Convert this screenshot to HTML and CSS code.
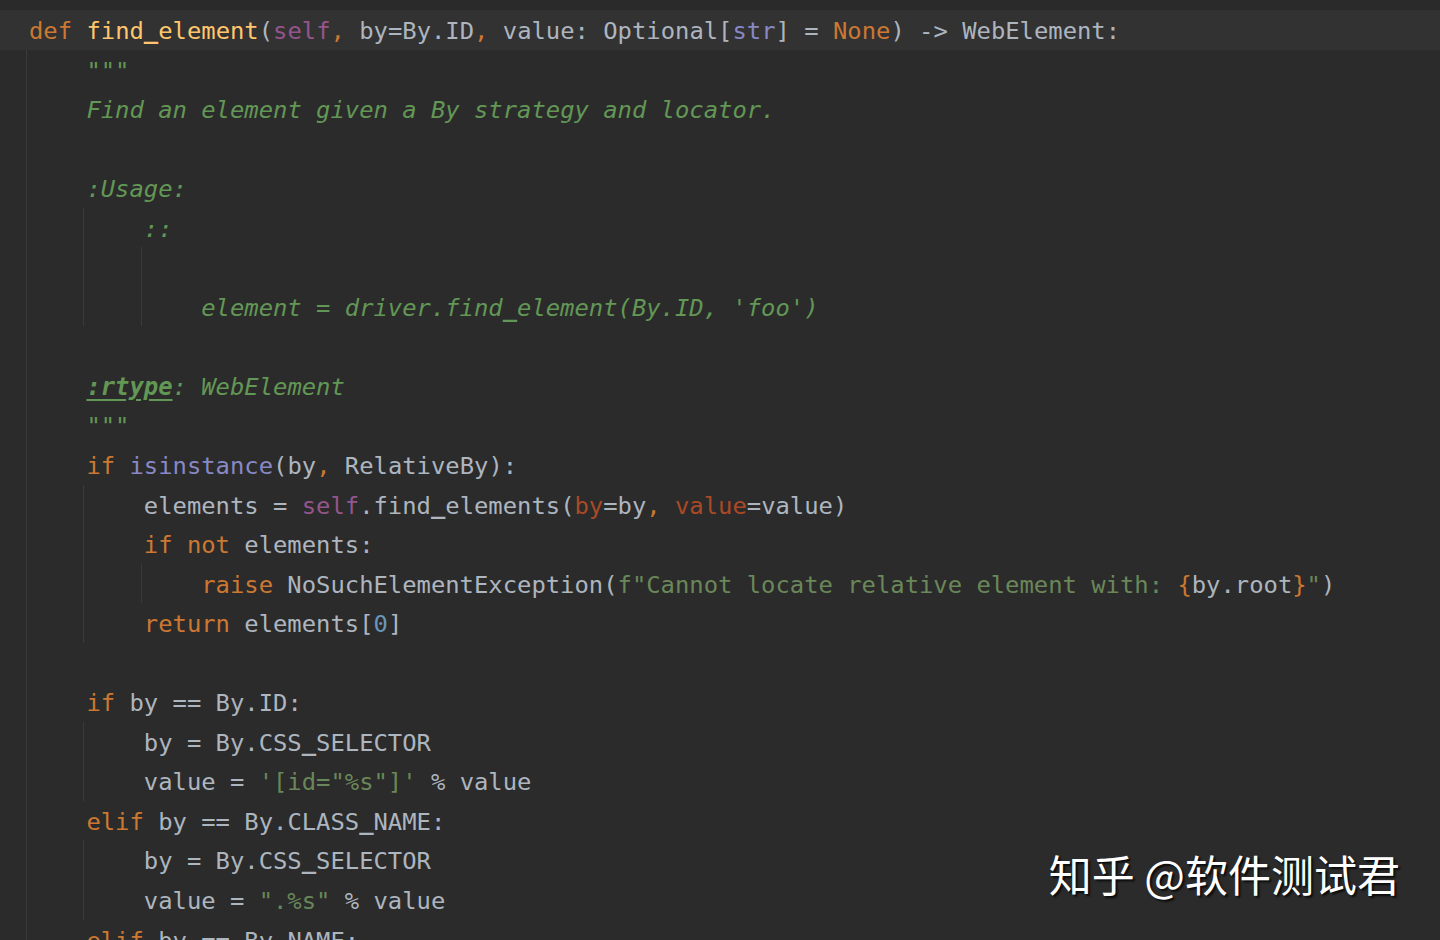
FILE: index.html
```html
<!DOCTYPE html>
<html lang="en">
<head>
<meta charset="utf-8">
<title>find_element</title>
<link rel="stylesheet" href="styles.css">
</head>
<body>
<div class="editor">
  <div class="topstrip"></div>
  <div class="code">
    <div class="ln cur"><span class="c"><span class="kw">def</span> <span class="fn">find<span class="u">_</span>element</span>(<span class="sf">self</span><span class="kw">,</span> by=By.ID<span class="kw">,</span> value: Optional[<span class="bi">str</span>] = <span class="kw">None</span>) -&gt; WebElement:</span></div>
    <div class="ln"><span class="ind g"></span><span class="c doc">"""</span></div>
    <div class="ln"><span class="ind g"></span><span class="c doc">Find an element given a By strategy and locator.</span></div>
    <div class="ln"><span class="ind g"></span></div>
    <div class="ln"><span class="ind g"></span><span class="c doc">:Usage:</span></div>
    <div class="ln"><span class="ind g"></span><span class="ind g"></span><span class="c doc">::</span></div>
    <div class="ln"><span class="ind g"></span><span class="ind g"></span><span class="ind g"></span></div>
    <div class="ln"><span class="ind g"></span><span class="ind g"></span><span class="ind g"></span><span class="c doc">element = driver.find<span class="u">_</span>element(By.ID, 'foo')</span></div>
    <div class="ln"><span class="ind g"></span></div>
    <div class="ln"><span class="ind g"></span><span class="c doc"><span class="tag">:rtype</span>: WebElement</span></div>
    <div class="ln"><span class="ind g"></span><span class="c doc">"""</span></div>
    <div class="ln"><span class="ind g"></span><span class="c"><span class="kw">if</span> <span class="bi">isinstance</span>(by<span class="kw">,</span> RelativeBy):</span></div>
    <div class="ln"><span class="ind g"></span><span class="ind g"></span><span class="c">elements = <span class="sf">self</span>.find<span class="u">_</span>elements(<span class="kwa">by</span>=by<span class="kw">,</span> <span class="kwa">value</span>=value)</span></div>
    <div class="ln"><span class="ind g"></span><span class="ind g"></span><span class="c"><span class="kw">if not</span> elements:</span></div>
    <div class="ln"><span class="ind g"></span><span class="ind g"></span><span class="ind g"></span><span class="c"><span class="kw">raise</span> NoSuchElementException(<span class="st">f"Cannot locate relative element with: </span><span class="kw">{</span>by.root<span class="kw">}</span><span class="st">"</span>)</span></div>
    <div class="ln"><span class="ind g"></span><span class="ind g"></span><span class="c"><span class="kw">return</span> elements[<span class="num">0</span>]</span></div>
    <div class="ln"><span class="ind g"></span></div>
    <div class="ln"><span class="ind g"></span><span class="c"><span class="kw">if</span> by == By.ID:</span></div>
    <div class="ln"><span class="ind g"></span><span class="ind g"></span><span class="c">by = By.CSS<span class="u">_</span>SELECTOR</span></div>
    <div class="ln"><span class="ind g"></span><span class="ind g"></span><span class="c">value = <span class="st">'[id="%s"]'</span> % value</span></div>
    <div class="ln"><span class="ind g"></span><span class="c"><span class="kw">elif</span> by == By.CLASS<span class="u">_</span>NAME:</span></div>
    <div class="ln"><span class="ind g"></span><span class="ind g"></span><span class="c">by = By.CSS<span class="u">_</span>SELECTOR</span></div>
    <div class="ln"><span class="ind g"></span><span class="ind g"></span><span class="c">value = <span class="st">".%s"</span> % value</span></div>
    <div class="ln"><span class="ind g"></span><span class="c"><span class="kw">elif</span> by == By.NAME:</span></div>
  </div>
  <div class="watermark">知乎 @软件测试君</div>
</div>
</body>
</html>
```

FILE: styles.css
```css
html, body {
  margin: 0;
  padding: 0;
  background: #2b2b2b;
  overflow: hidden;
}
.editor {
  position: relative;
  width: 1440px;
  height: 940px;
  overflow: hidden;
  background: #2b2b2b;
}
.topstrip {
  height: 10px;
  background: #2a2a2a;
}
.code {
  font-family: "DejaVu Sans Mono", "Liberation Mono", monospace;
  font-size: 23.85px;
  color: #adb5bf;
}
.ln {
  display: flex;
  align-items: flex-start;
  height: 39.55px;
  padding-left: 26px;
  white-space: pre;
}
.ln.cur {
  background: #323232;
}
.ind {
  flex: 0 0 auto;
  align-self: stretch;
  width: 4ch;
  box-sizing: border-box;
}
.ind.g {
  border-left: 1px solid #3a3a3a;
}
.c {
  padding-left: 3px;
  padding-top: 2px;
  line-height: 39.55px;
}
.u {
  font-weight: bold;
}
.kw { color: #cc7832; }
.fn { color: #ffc66d; }
.sf { color: #94558d; }
.bi { color: #8888c6; }
.kwa { color: #aa4926; }
.st { color: #6a8759; }
.num { color: #6897bb; }
.doc {
  color: #629755;
  font-style: italic;
}
.tag {
  font-weight: bold;
  text-decoration: underline;
  text-underline-offset: 4px;
}
.watermark {
  position: absolute;
  right: 40px;
  bottom: 36px;
  font-family: "Noto Sans CJK SC", "Noto Sans", sans-serif;
  font-size: 43px;
  font-weight: 400;
  color: #ffffff;
  text-shadow: 2px 2px 2px rgba(0, 0, 0, 0.75);
  white-space: nowrap;
}
```
